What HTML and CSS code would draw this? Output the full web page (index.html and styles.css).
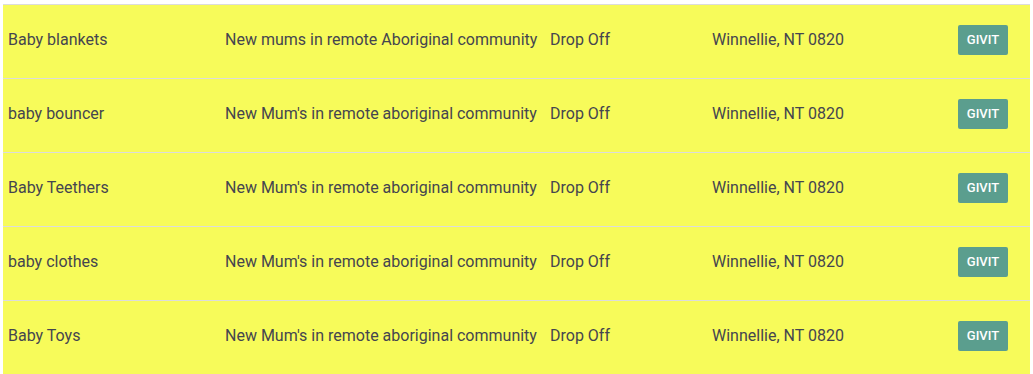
FILE: index.html
```html
<!DOCTYPE html>
<html>
<head>
<meta charset="utf-8">
<link rel="stylesheet" href="styles.css">
</head>
<body>
<div class="list">
  <div class="row">
    <div class="cell">Baby blankets</div>
    <div class="cell">New mums in remote Aboriginal community</div>
    <div class="cell">Drop Off</div>
    <div class="cell">Winnellie, NT 0820</div>
    <div class="cell action"><button class="btn">GIVIT</button></div>
  </div>
  <div class="row">
    <div class="cell">baby bouncer</div>
    <div class="cell">New Mum's in remote aboriginal community</div>
    <div class="cell">Drop Off</div>
    <div class="cell">Winnellie, NT 0820</div>
    <div class="cell action"><button class="btn">GIVIT</button></div>
  </div>
  <div class="row">
    <div class="cell">Baby Teethers</div>
    <div class="cell">New Mum's in remote aboriginal community</div>
    <div class="cell">Drop Off</div>
    <div class="cell">Winnellie, NT 0820</div>
    <div class="cell action"><button class="btn">GIVIT</button></div>
  </div>
  <div class="row">
    <div class="cell">baby clothes</div>
    <div class="cell">New Mum's in remote aboriginal community</div>
    <div class="cell">Drop Off</div>
    <div class="cell">Winnellie, NT 0820</div>
    <div class="cell action"><button class="btn">GIVIT</button></div>
  </div>
  <div class="row">
    <div class="cell">Baby Toys</div>
    <div class="cell">New Mum's in remote aboriginal community</div>
    <div class="cell">Drop Off</div>
    <div class="cell">Winnellie, NT 0820</div>
    <div class="cell action"><button class="btn">GIVIT</button></div>
  </div>
</div>
</body>
</html>
```

FILE: styles.css
```css
html, body {
  margin: 0;
  padding: 0;
  background: #ffffff;
}
body {
  padding: 4px 3px 0 3px;
  font-family: Roboto, "Liberation Sans", sans-serif;
  font-size: 16px;
  color: #45454f;
}
.list {
  display: flex;
  flex-direction: column;
}
.row {
  display: grid;
  grid-template-columns: 217px 325px 162px 246px 1fr;
  height: 73px;
  border-top: 1px solid #dcdcdc;
  background: #f7fb5a;
}
.cell {
  display: flex;
  align-items: center;
  padding-left: 5px;
  padding-bottom: 4px;
  white-space: nowrap;
}
.cell.action {
  padding-bottom: 0;
}
.btn {
  width: 50px;
  height: 30px;
  margin-bottom: 3px;
  border: none;
  border-radius: 2px;
  background: #5b9e8e;
  color: #ffffff;
  font-family: Roboto, "Liberation Sans", sans-serif;
  font-size: 13px;
  font-weight: 500;
  padding: 0 0 2px 0;
}
```
